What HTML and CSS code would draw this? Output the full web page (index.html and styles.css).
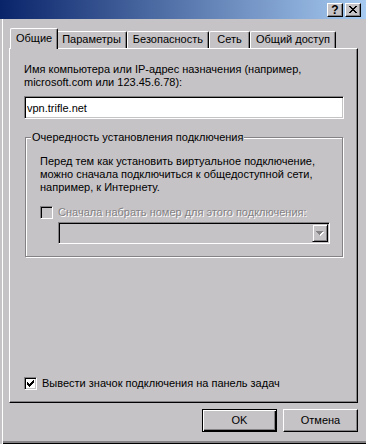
FILE: index.html
```html
<!DOCTYPE html>
<html lang="ru">
  <head>
    <meta charset="utf-8" />
    <title>Свойства подключения</title>
    <link rel="stylesheet" href="styles.css">
  </head>
  <body>
    <div class="window">
      <div class="titlebar">
        <button class="cap-btn">?</button>
        <button class="cap-btn">
          <svg width="8" height="7" viewBox="0 0 8 7" shape-rendering="crispEdges">
            <path d="M0 0h2v1H0z M6 0h2v1H6z M1 1h2v1H1z M5 1h2v1H5z M2 2h4v1H2z M3 3h2v1H3z M2 4h4v1H2z M1 5h2v1H1z M5 5h2v1H5z M0 6h2v1H0z M6 6h2v1H6z" fill="#000"/>
          </svg>
        </button>
      </div>

      <div class="dialog">
        <div class="tabs">
          <div class="tab active">Общие</div>
          <div class="tab">Параметры</div>
          <div class="tab">Безопасность</div>
          <div class="tab">Сеть</div>
          <div class="tab">Общий доступ</div>
        </div>

        <div class="panel">
          <div class="panel-body">
            <label class="field-label" for="host">Имя компьютера или IP-адрес назначения (например,<br>microsoft.com или 123.45.6.78):</label>
            <input id="host" class="textbox" type="text" value="vpn.trifle.net">

            <fieldset class="group">
              <legend>Очередность установления подключения</legend>
              <div class="group-body">
                <p class="note">Перед тем как установить виртуальное подключение,<br>можно сначала подключиться к общедоступной сети,<br>например, к Интернету.</p>
                <div class="check disabled">
                  <span class="box"></span>
                  <span>Сначала набрать номер для этого подключения:</span>
                </div>
                <div class="combo">
                  <span class="combo-arrow">
                    <svg width="8" height="5" viewBox="0 0 8 5" shape-rendering="crispEdges">
                      <path d="M1 1h7v1H1z M2 2h5v1H2z M3 3h3v1H3z M4 4h1v1H4z" fill="#fff"/>
                      <path d="M0 0h7v1H0z M1 1h5v1H1z M2 2h3v1H2z M3 3h1v1H3z" fill="#848284"/>
                    </svg>
                  </span>
                </div>
              </div>
            </fieldset>
          </div>

          <div class="check">
            <span class="box">
              <svg width="7" height="7" viewBox="0 0 7 7" shape-rendering="crispEdges">
                <path d="M0 2h1v3H0z M1 3h1v3H1z M2 4h1v3H2z M3 3h1v3H3z M4 2h1v3H4z M5 1h1v3H5z M6 0h1v3H6z" fill="#000"/>
              </svg>
            </span>
            <span>Вывести значок подключения на панель задач</span>
          </div>
        </div>

        <div class="footer">
          <button class="btn default">OK</button>
          <button class="btn">Отмена</button>
        </div>
      </div>
    </div>
  </body>
</html>
```

FILE: styles.css
```css
:root {
  --face: #c6c3c6;
  --shadow: #848284;
  --dark: #000;
  --light: #fff;
}

* {
  box-sizing: border-box;
}

body {
  margin: 0;
  background-color: var(--face);
  font-family: "Liberation Sans", Arial, sans-serif;
  font-size: 11px;
  line-height: 13px;
  color: #000;
}

.window {
  width: 366px;
  height: 444px;
  display: flex;
  flex-direction: column;
  box-shadow: inset 2px 0 var(--face), inset 3px 0 var(--light),
    inset 0 -1px var(--dark), inset 0 -3px var(--shadow);
}

/* caption */
.titlebar {
  height: 19px;
  flex: none;
  display: flex;
  justify-content: flex-end;
  align-items: center;
  gap: 2px;
  padding-right: 5px;
  background: linear-gradient(to right, #0a246a, #a6caf0);
}

.cap-btn {
  width: 16px;
  height: 14px;
  padding: 0;
  display: flex;
  align-items: center;
  justify-content: center;
  background-color: var(--face);
  border: 1px solid;
  border-color: var(--light) var(--dark) var(--dark) var(--light);
  box-shadow: inset -1px -1px var(--shadow);
  font: bold 12px/12px "Liberation Sans", Arial, sans-serif;
  color: #000;
}

.dialog {
  flex: 1;
  display: flex;
  flex-direction: column;
  padding: 9px 8px 12px 9px;
}

/* tabs */
.tabs {
  display: flex;
  align-items: flex-end;
  height: 20px;
  flex: none;
  padding-left: 3px;
}

.tab {
  height: 17px;
  min-width: 41px;
  padding: 0 5px;
  text-align: center;
  line-height: 15px;
  white-space: nowrap;
  border: 1px solid;
  border-bottom: 0;
  border-color: var(--light) var(--dark) var(--dark) var(--light);
  border-radius: 2px 2px 0 0;
  box-shadow: inset -1px 0 var(--shadow);
}

.tab.active {
  position: relative;
  z-index: 1;
  height: 21px;
  margin: 0 -2px -1px;
  padding-top: 2px;
  background-color: var(--face);
}

.panel {
  flex: 1;
  display: flex;
  flex-direction: column;
  padding: 14px 13px 12px 14px;
  border: 1px solid;
  border-color: var(--light) var(--dark) var(--dark) var(--light);
  box-shadow: inset -1px -1px var(--shadow);
}

.panel-body {
  flex: 1;
}

.field-label {
  display: block;
}

.textbox {
  display: block;
  width: 100%;
  height: 23px;
  margin: 7px 0 0;
  padding: 0 2px;
  border: 1px solid;
  border-color: var(--shadow) var(--light) var(--light) var(--shadow);
  box-shadow: inset 1px 1px var(--dark), inset -1px -1px var(--face);
  background-color: #fff;
  font: inherit;
  color: #000;
  outline: none;
}

/* group box */
.group {
  margin: 12px 1px 0;
  padding: 0;
  min-width: 0;
  border: 1px solid var(--shadow);
  box-shadow: 1px 1px var(--light), inset 1px 1px var(--light);
}

.group legend {
  margin-left: 5px;
  padding: 0 1px;
  line-height: 13px;
  background-color: var(--face);
}

.group-body {
  padding: 11px 12px 12px 14px;
}

.note {
  margin: 0;
}

.check {
  display: flex;
  align-items: center;
  gap: 5px;
  height: 13px;
  white-space: nowrap;
}

.group .check {
  margin-top: 12px;
}

.box {
  width: 13px;
  height: 13px;
  flex: none;
  display: flex;
  align-items: center;
  justify-content: center;
  border: 1px solid;
  border-color: var(--shadow) var(--light) var(--light) var(--shadow);
  box-shadow: inset 1px 1px var(--dark), inset -1px -1px var(--face);
  background-color: #fff;
}

.check.disabled {
  color: var(--shadow);
  text-shadow: 1px 1px var(--light);
}

.check.disabled .box {
  background-color: var(--face);
}

.combo {
  height: 22px;
  margin: 3px 0 0 18px;
  padding: 1px;
  display: flex;
  justify-content: flex-end;
  border: 1px solid;
  border-color: var(--shadow) var(--light) var(--light) var(--shadow);
  box-shadow: inset 1px 1px var(--dark), inset -1px -1px var(--face);
  background-color: var(--face);
}

.combo-arrow {
  width: 16px;
  height: 18px;
  display: flex;
  align-items: center;
  justify-content: center;
  border: 1px solid;
  border-color: var(--face) var(--dark) var(--dark) var(--face);
  box-shadow: inset 1px 1px var(--light), inset -1px -1px var(--shadow);
  background-color: var(--face);
}

/* buttons */
.footer {
  display: flex;
  justify-content: flex-end;
  gap: 6px;
  margin-top: 6px;
  flex: none;
}

.btn {
  width: 75px;
  height: 23px;
  padding: 0;
  background-color: var(--face);
  border: 1px solid;
  border-color: var(--light) var(--dark) var(--dark) var(--light);
  box-shadow: inset -1px -1px var(--shadow);
  font: inherit;
  color: #000;
}

.btn.default {
  border-color: var(--dark);
  box-shadow: inset 1px 1px var(--light), inset -1px -1px var(--dark),
    inset -2px -2px var(--shadow);
}
```
